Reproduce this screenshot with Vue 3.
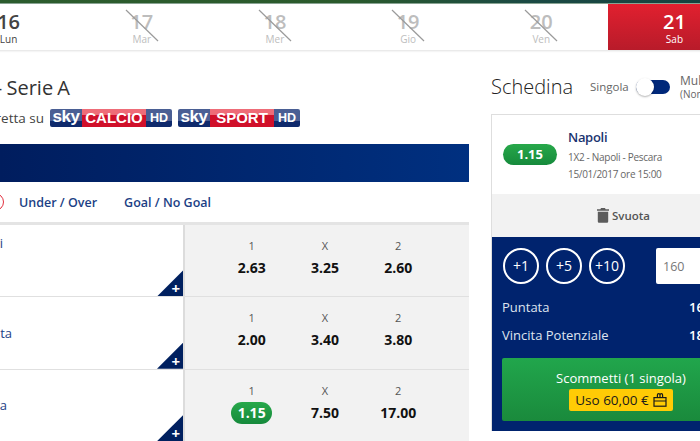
<template>
  <div class="page">
    <div class="strip"></div>

    <nav class="days">
      <div
        v-for="day in days"
        :key="day.num"
        class="day"
        :class="{ off: day.off, active: day.active }"
      >
        <span class="num">{{ day.num }}</span>
        <span class="name">{{ day.name }}</span>
        <svg v-if="day.off" class="cross" width="34" height="34" viewBox="0 0 34 34">
          <path d="M1 1 L33 32" stroke="#9a9a9a" stroke-width="1.2" fill="none" />
        </svg>
      </div>
    </nav>

    <main class="main">
      <section class="left">
        <h1 class="title">Calcio - Serie A</h1>
        <div class="live">
          <span class="live-text">In diretta su</span>
          <span v-for="ch in channels" :key="ch" class="badge">
            <span class="b-sky">sky</span>
            <span class="b-name">{{ ch }}</span>
            <span class="b-hd">HD</span>
          </span>
        </div>

        <div class="bluebar"></div>

        <div class="tabs">
          <span class="tab-circle"></span>
          <span class="tab">Under / Over</span>
          <span class="tab">Goal / No Goal</span>
        </div>

        <div v-for="row in rows" :key="row.name" class="row">
          <div class="match">
            <div class="match-name" :class="{ high: row.high }" :style="{ width: row.end + 'px' }">{{ row.name }}</div>
            <span class="corner"><span class="plus">+</span></span>
          </div>
          <div class="odds">
            <div v-for="odd in row.odds" :key="odd.label" class="odd">
              <span class="odd-label">{{ odd.label }}</span>
              <span class="odd-value" :class="{ picked: odd.picked }">{{ odd.value }}</span>
            </div>
          </div>
        </div>
      </section>

      <aside class="right">
        <div class="slip-head">
          <h2 class="slip-title">Schedina</h2>
          <span class="mode">Singola</span>
          <span class="toggle"><span class="knob"></span></span>
          <span class="mode-alt">
            <span>Multipla</span>
            <small>(Non disponibile)</small>
          </span>
        </div>

        <div class="card">
          <div class="bet">
            <span class="bet-odd">1.15</span>
            <div class="bet-info">
              <strong>Napoli</strong>
              <span>1X2 - Napoli - Pescara</span>
              <span>15/01/2017 ore 15:00</span>
            </div>
          </div>

          <div class="clear">
            <svg width="12" height="15" viewBox="0 0 12 15">
              <path d="M4 0h4l.6 1.2H12v1.6H0V1.2h3.4z M.8 3.8h10.4V13.6a1.2 1.2 0 0 1-1.2 1.2H2a1.2 1.2 0 0 1-1.2-1.2z" fill="#5c5c5c" />
            </svg>
            <span>Svuota</span>
          </div>

          <div class="panel">
            <div class="stakes">
              <span v-for="s in stakes" :key="s" class="stake">{{ s }}</span>
              <span class="amount">160</span>
            </div>
            <div class="line"><span>Puntata</span><b>160,00 €</b></div>
            <div class="line"><span>Vincita Potenziale</span><b>184,00 €</b></div>
            <div class="submit">
              <span class="submit-text">Scommetti (1 singola)</span>
              <span class="bonus">
                Uso 60,00 €
                <svg width="14" height="14" viewBox="0 0 14 14" fill="none" stroke="#1a1a1a" stroke-width="1.2">
                  <rect x="1" y="4.6" width="12" height="8.6" />
                  <path d="M1 8h12M4.4 4.6V2a1.3 1.3 0 0 1 2.6 0v2.6M7 4.6V2a1.3 1.3 0 0 1 2.6 0v2.6" />
                </svg>
              </span>
            </div>
          </div>
        </div>
      </aside>
    </main>
  </div>
</template>

<script setup>
const days = [
  { num: 16, name: 'Lun', off: false },
  { num: 17, name: 'Mar', off: true },
  { num: 18, name: 'Mer', off: true },
  { num: 19, name: 'Gio', off: true },
  { num: 20, name: 'Ven', off: true },
  { num: 21, name: 'Sab', active: true },
]

const channels = ['CALCIO', 'SPORT']
const stakes = ['+1', '+5', '+10']

const rows = [
  {
    name: 'Genoa - Cagliari',
    end: 203,
    high: true,
    odds: [
      { label: '1', value: '2.63' },
      { label: 'X', value: '3.25' },
      { label: '2', value: '2.60' },
    ],
  },
  {
    name: 'Sampdoria - Atalanta',
    end: 212,
    odds: [
      { label: '1', value: '2.00' },
      { label: 'X', value: '3.40' },
      { label: '2', value: '3.80' },
    ],
  },
  {
    name: 'Napoli - Pescara',
    end: 207,
    odds: [
      { label: '1', value: '1.15', picked: true },
      { label: 'X', value: '7.50' },
      { label: '2', value: '17.00' },
    ],
  },
]
</script>

<style>
html,
body {
  margin: 0;
  overflow: hidden;
  background: #fff;
}
</style>

<style scoped>
.page {
  width: 700px;
  height: 441px;
  overflow: hidden;
  position: relative;
  font-family: "Open Sans", sans-serif;
  color: #333;
  background: #fff;
}

.strip {
  height: 4px;
  background: linear-gradient(90deg, #2c5c2e 0%, #2a5a2c 50%, #1b4a44 75%, #14423f 100%);
  border-bottom: 1px solid #8aa594;
  box-sizing: border-box;
}

.days {
  display: flex;
  height: 46px;
  margin-left: -58px;
  width: 799px;
  box-shadow: 0 1px 2px rgba(0, 0, 0, 0.12);
}

.day {
  flex: 1;
  display: flex;
  flex-direction: column;
  align-items: center;
  position: relative;
  padding-top: 7px;
  box-sizing: border-box;
  color: #444;
}

.num {
  font-size: 20px;
  line-height: 22px;
  font-weight: 600;
}

.name {
  font-size: 10px;
  line-height: 12px;
}

.off {
  color: #bdbdbd;
}

.active {
  color: #fff;
  background: linear-gradient(180deg, #e1202f, #b81b2a);
}

.cross {
  position: absolute;
  left: 50%;
  top: 5px;
  margin-left: -17px;
}

.main {
  display: flex;
  gap: 22px;
  margin-left: -200px;
}

.left {
  width: 669px;
  flex: none;
  padding-top: 24px;
}

.title {
  margin: 0;
  width: 270px;
  font-size: 20px;
  line-height: 28px;
  font-weight: 400;
  word-spacing: -1px;
  color: #333;
  text-align: right;
  white-space: nowrap;
}

.live {
  display: flex;
  align-items: center;
  height: 18px;
  margin-top: 7px;
  gap: 6px;
}

.live-text {
  font-size: 13.5px;
  white-space: nowrap;
  color: #444;
  width: 244px;
  text-align: right;
  flex: none;
}

.badge {
  display: flex;
  width: 122px;
  height: 18px;
  flex: none;
  border-radius: 2px;
  overflow: hidden;
  color: #fff;
  font-family: "Liberation Sans", sans-serif;
  font-weight: 700;
  line-height: 18px;
  text-align: center;
  background: linear-gradient(180deg, #4a5f94 0%, #4a5f94 66%, #0f2a6c 66%, #0f2a6c 100%);
}

.b-sky {
  width: 32px;
  font-size: 17px;
  line-height: 16px;
  letter-spacing: -0.5px;
}

.b-name {
  flex: 1;
  font-size: 15px;
  background: linear-gradient(180deg, #ee6c78 0%, #ee6c78 32%, #d0102a 32%, #d0102a 100%);
}

.b-hd {
  width: 26px;
  font-size: 12.5px;
}

.bluebar {
  height: 38px;
  margin-top: 17px;
  background: linear-gradient(90deg, #001d5e 30%, #003080 100%);
}

.tabs {
  display: flex;
  align-items: center;
  gap: 27px;
  height: 43px;
  box-sizing: border-box;
  border-bottom: 3px solid #e4e4e4;
  padding-left: 219px;
  position: relative;
  font-size: 12.5px;
  font-weight: 600;
  color: #1c3f85;
}

.tab {
  white-space: nowrap;
}

.tab-circle {
  position: absolute;
  left: 186px;
  top: 11px;
  width: 16px;
  height: 16px;
  border: 1px solid #e2303f;
  border-radius: 50%;
}

.row {
  display: flex;
  height: 72.4px;
  box-sizing: border-box;
  border-bottom: 1px solid #e0e0e0;
}

.match {
  width: 383px;
  flex: none;
  position: relative;
  display: flex;
  align-items: center;
  background: #fff;
  border-right: 2px solid #dcdcdc;
}

.match-name {
  text-align: right;
  font-size: 13px;
  color: #1c3f85;
  white-space: nowrap;
}

.match-name.high {
  align-self: flex-start;
  margin-top: 9px;
}

.corner {
  position: absolute;
  right: 0;
  bottom: 0;
  width: 26px;
  height: 26px;
  background: #00205f;
  clip-path: polygon(100% 0, 100% 100%, 0 100%);
}

.plus {
  position: absolute;
  right: 3px;
  bottom: 1px;
  color: #fff;
  font-size: 15px;
  line-height: 14px;
  font-weight: 700;
}

.odds {
  flex: 1;
  background: #f2f2f2;
  padding-left: 30px;
  display: flex;
}

.odd {
  width: 73.3px;
  flex: none;
  display: flex;
  flex-direction: column;
  align-items: center;
  padding-top: 14px;
  box-sizing: border-box;
}

.odd-label {
  font-size: 11px;
  line-height: 14px;
  color: #555;
}

.odd-value {
  font-size: 14px;
  line-height: 22px;
  font-weight: 700;
  margin-top: 4px;
  color: #111;
}

.picked {
  width: 41px;
  text-align: center;
  color: #fff;
  border-radius: 11px;
  background: linear-gradient(180deg, #27a84a, #168a3c);
}

.right {
  width: 260px;
  flex: none;
}

.slip-head {
  display: flex;
  align-items: center;
  height: 41px;
  padding-top: 16px;
  white-space: nowrap;
}

.slip-title {
  margin: 0;
  font-size: 20px;
  font-weight: 300;
  color: #222;
  width: 99px;
  flex: none;
}

.mode {
  font-size: 11.5px;
  color: #666;
  width: 46px;
  flex: none;
}

.toggle {
  position: relative;
  width: 34px;
  height: 14px;
  border-radius: 7px;
  background: #00287a;
  flex: none;
  margin-right: 10px;
}

.knob {
  position: absolute;
  left: 0;
  top: -2px;
  width: 18px;
  height: 18px;
  border-radius: 50%;
  background: #fff;
  box-shadow: 0 1px 2px rgba(0, 0, 0, 0.3);
}

.mode-alt {
  display: flex;
  flex-direction: column;
  font-size: 12px;
  line-height: 14px;
  color: #666;
}

.mode-alt small {
  font-size: 10px;
  line-height: 12px;
}

.card {
  margin-top: 7px;
  border: 1px solid #dedede;
  border-bottom: 0;
}

.bet {
  display: flex;
  align-items: center;
  height: 79px;
  padding-left: 11px;
  box-sizing: border-box;
}

.bet-odd {
  width: 54px;
  height: 21px;
  flex: none;
  border-radius: 11px;
  text-align: center;
  font-size: 13px;
  line-height: 21px;
  font-weight: 700;
  color: #fff;
  background: linear-gradient(180deg, #27a84a, #168a3c);
}

.bet-info {
  display: flex;
  flex-direction: column;
  margin-left: 11px;
  font-size: 10px;
  line-height: 17px;
  letter-spacing: -0.3px;
  color: #666;
}

.bet-info strong {
  font-size: 13px;
  line-height: 23px;
  color: #1a3470;
  font-weight: 600;
}

.clear {
  height: 43px;
  display: flex;
  align-items: center;
  background: #f2f2f2;
  padding-left: 105px;
  gap: 3px;
  font-size: 11.5px;
  font-weight: 600;
  color: #555;
}

.panel {
  height: 194px;
  background: #00236e;
  color: #fff;
  padding: 11px 0 0 10px;
  box-sizing: border-box;
}

.stakes {
  display: flex;
  gap: 7px;
  margin-left: 1px;
}

.stake {
  width: 36px;
  height: 36px;
  box-sizing: border-box;
  border: 2px solid #fff;
  border-radius: 50%;
  text-align: center;
  line-height: 32px;
  font-size: 14px;
}

.amount {
  width: 80px;
  height: 36px;
  margin-left: 24px;
  background: #fff;
  color: #777;
  border-radius: 2px;
  font-size: 12.5px;
  line-height: 37px;
  padding-left: 7px;
  box-sizing: border-box;
}

.line {
  display: flex;
  justify-content: space-between;
  width: 251px;
  font-size: 13px;
  line-height: 28px;
  color: #dfe4ef;
}

.stakes + .line {
  margin-top: 9px;
}

.line b {
  color: #fff;
  width: 64px;
  white-space: nowrap;
  font-weight: 600;
}

.submit {
  margin-top: 9px;
  width: 238px;
  height: 63px;
  border-radius: 2px;
  display: flex;
  flex-direction: column;
  align-items: center;
  background: linear-gradient(180deg, #21a64c, #1a8a3c);
}

.submit-text {
  font-size: 13px;
  line-height: 18px;
  margin-top: 11px;
  font-weight: 500;
}

.bonus {
  margin-top: 2px;
  display: flex;
  align-items: center;
  gap: 4px;
  height: 22px;
  padding: 0 6px;
  border-radius: 2px;
  background: #ffcb05;
  color: #1a1a1a;
  font-size: 13.5px;
  font-weight: 500;
}
</style>
